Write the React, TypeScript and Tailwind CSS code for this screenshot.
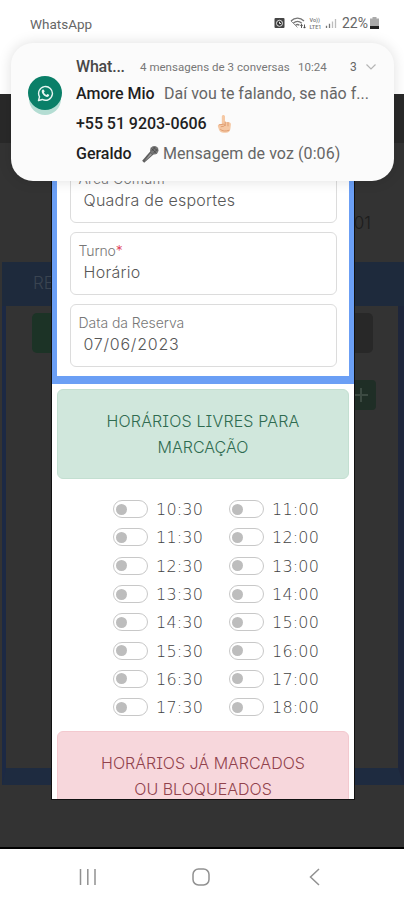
import React from "react";

const leftTimes = ["10:30", "11:30", "12:30", "13:30", "14:30", "15:30", "16:30", "17:30"];
const rightTimes = ["11:00", "12:00", "13:00", "14:00", "15:00", "16:00", "17:00", "18:00"];

function WhatsAppIcon() {
  return (
    <svg width="17" height="17" viewBox="0 0 18 18" fill="none">
      <path d="M1.6 16.4l1.1-3.9A7.3 7.3 0 1 1 5.6 15.3z" stroke="#e8f5f1" strokeWidth="1.5" strokeLinejoin="round" />
      <path d="M6.2 4.8l1.1.1.8 1.9-.8 1.1c.6 1.2 1.4 2 2.7 2.6l.9-1 2 .9c.1 1.500-1 2.300-2.200 2.300C8 12.400 5 9.400 5 6.700c0-.9.500-1.700 1.200-1.900z" fill="#e8f5f1" />
    </svg>
  );
}

function StatusIcons() {
  return (
    <svg width="64" height="16" viewBox="0 0 64 16" fill="none">
      <rect x="0.500" y="3" width="10" height="10" rx="1" fill="#454545" />
      <circle cx="5.500" cy="8.300" r="3" fill="#333" stroke="#e5e5e5" strokeWidth="1" />
      <path d="M5.500 6.800v1.700h1.600" stroke="#fff" strokeWidth="0.900" />
      <path d="M17 6c3.800-3.900 9.200-3.900 13 0M19.200 8.300c2.700-2.500 5.900-2.500 8.600 0M21.500 10.300c1.300-1.100 2.600-1.100 3.900 0" stroke="#777" strokeWidth="1.300" />
      <path d="M17 6l6.500 6.500" stroke="#888" strokeWidth="0.900" />
      <path d="M27.500 13V9.500m-1.200 1.200 1.200-1.300 1.200 1.300M30.500 9.500v3.600m-1.100-1.200 1.100 1.200 1.100-1.200" stroke="#444" strokeWidth="0.900" />
      <g fill="#777" fontFamily="Roboto, sans-serif" fontSize="5.500" fontWeight="500">
        <text x="35.500" y="7.200">Vo))</text>
        <text x="35.500" y="13.800">LTE1</text>
      </g>
      <path d="M52.500 13v-2.300M55.500 13V8.700" stroke="#777" strokeWidth="1.300" />
      <path d="M58.500 13V6.500M61.500 13V4" stroke="#bdbdbd" strokeWidth="1.300" />
    </svg>
  );
}

function Microphone() {
  return (
    <svg width="18" height="19" viewBox="0 0 18 19">
      <path d="M9.800 5.800l3.200 3.200L3.200 17.700l-2-2z" fill="#5d5d5d" />
      <path d="M9.500 8.200l1.500 1.500-7.800 6.700z" fill="#999" />
      <circle cx="13.300" cy="5.300" r="4.200" fill="#777" />
      <path d="M10.500 3.500l4.700 4.600M12.400 2l4 4M10.400 6.200l4-4.300M12.300 8.400l4.300-4.500" stroke="#444" strokeWidth="0.700" />
    </svg>
  );
}

function PointingHand() {
  return (
    <svg width="15" height="20" viewBox="0 0 15 20">
      <path d="M4.800 10V2.600C4.800.5 8 .5 8 2.600v5.200l3.900.4c1.500.2 2.100 1 2 2.300l-.5 4.300c-.3 2.800-1.900 4-4.500 4H6.400c-2 0-3.400-1-4.300-2.800L.9 12.600c-.4-1.300.5-2 1.600-2.100z" fill="#f5c8a4" />
      <path d="M2.200 10.800l4.300-.6c1.400 0 1.600 1.700.3 2l-2.700.5M8.200 8v3.600M11 8.400v3.500M3.500 15.500c1.700 1.800 5.300 2 8.500.8" fill="none" stroke="#dd986c" strokeWidth="0.900" strokeLinecap="round" />
    </svg>
  );
}

function Toggle() {
  return (
    <span className="flex h-[18px] w-[35px] shrink-0 items-center rounded-full border border-[#c8c8c8] bg-white pl-[2px]">
      <span className="h-[11px] w-[11px] rounded-full bg-[#bdbdbd]" />
    </span>
  );
}

function TimeColumn({ times }: { times: string[] }) {
  return (
    <div className="flex w-[116px] flex-col">
      {times.map((t) => (
        <div key={t} className="flex h-[28.3px] items-center gap-[8px]">
          <Toggle />
          <span className="pt-[2px] font-['DejaVu_Sans'] text-[16px] font-extralight leading-none tracking-[0.2px] text-[#424242]">{t}</span>
        </div>
      ))}
    </div>
  );
}

function Field({ label, value, required, tracking, labelTracking }: { label: string; value: string; required?: boolean; tracking: string; labelTracking: string }) {
  return (
    <div className="h-[63px] w-[267px] shrink-0 rounded-[6px] border border-[#dcdcdc] pl-[8px] pt-[9px] text-[#777]">
      <div className={"h-[18px] whitespace-nowrap text-[14px] font-light leading-[18px] " + labelTracking}>
        {label}
        {required && <span className="text-[#e0405a]">*</span>}
      </div>
      <div className={"ml-[5px] mt-[1px] whitespace-nowrap text-[16px] font-light leading-[22px] text-[#585858] " + tracking}>{value}</div>
    </div>
  );
}

function Backdrop() {
  return (
    <div className="flex h-[755px] flex-col overflow-hidden border-b-2 border-black bg-[#333]">
      <div className="h-[49px] shrink-0 bg-[#292929]" />
      <div className="flex h-[119px] shrink-0 items-end justify-end pb-[26px] pr-[33px] text-[17px] font-light text-[#1c1c1c]">01</div>
      <div className="ml-[2px] flex h-[523px] shrink-0 flex-col border-b-[17px] border-l-[4px] border-r-[6px] border-b-[#1e2b40] border-l-[#1c2944] border-r-[#1e263b]">
        <div className="-ml-[4px] -mr-[6px] flex h-[44px] shrink-0 items-center bg-[#1e2a3c] pl-[31px] text-[17px] font-light text-[#3a4451]">RE</div>
        <div className="mt-[7px] flex justify-between pl-[26px] pr-[25px]">
          <div className="h-[40px] w-[60px] rounded-[5px] bg-[#1c3326]" />
          <div className="h-[40px] w-[60px] rounded-[5px] bg-[#282828]" />
        </div>
        <div className="mr-[22px] mt-[27px] flex h-[30px] w-[30px] items-center justify-center self-end rounded-[4px] bg-[#1f2e26]">
          <svg width="14" height="14" viewBox="0 0 14 14" stroke="#3c4a42" strokeWidth="2"><path d="M7 0v14M0 7h14" /></svg>
        </div>
      </div>
    </div>
  );
}

function ReservationModal() {
  return (
    <div className="absolute left-[52px] top-[94px] flex h-[705px] w-[302px] flex-col overflow-hidden bg-white shadow-[0_0_0_1px_#111] [font-feature-settings:'cv08']">
      <div className="flex h-[290px] shrink-0 flex-col items-center gap-[9px] border-x-[5px] border-b-[8px] border-[#6b9ff5] pt-[66px]">
        <Field label="Área Comum" value="Quadra de esportes" tracking="tracking-[0.25px]" labelTracking="tracking-[0.1px]" />
        <Field label="Turno" value="Horário" required tracking="tracking-[0.3px]" labelTracking="tracking-[-0.1px]" />
        <Field label="Data da Reserva" value="07/06/2023" tracking="tracking-[0.75px]" labelTracking="tracking-[-0.05px]" />
      </div>
      <div className="mx-[5px] mt-[5px] flex h-[90px] shrink-0 flex-col items-center rounded-[6px] border border-[#c3dfd1] bg-[#d0e7dc] pt-[18px] text-[16px] font-light leading-[26px] text-[#2f6b50]">
        <span className="whitespace-nowrap tracking-[0.15px]">HORÁRIOS LIVRES PARA</span>
        <span>MARCAÇÃO</span>
      </div>
      <div className="mt-[16px] flex h-[227px] shrink-0 pl-[61px]">
        <TimeColumn times={leftTimes} />
        <TimeColumn times={rightTimes} />
      </div>
      <div className="mx-[5px] mt-[9px] flex h-[90px] shrink-0 flex-col items-center rounded-[6px] border border-[#f3c9cf] bg-[#f7d7dc] pt-[18px] text-[16px] font-light leading-[26px] text-[#91424c]">
        <span className="whitespace-nowrap">HORÁRIOS JÁ MARCADOS</span>
        <span className="whitespace-nowrap">OU BLOQUEADOS</span>
      </div>
    </div>
  );
}

function Notification() {
  return (
    <div className="absolute left-[11px] top-[43px] flex h-[138px] w-[383px] rounded-[22px] bg-[#fbfbfb] font-['Roboto'] shadow-[0_0_14px_rgba(0,0,0,0.13)]">
      <div className="ml-[17px] mt-[33px] flex h-[34px] w-[34px] items-center justify-center rounded-full bg-[#0a7f68] shadow-[0_6px_0_-1px_#b4ddd3]">
        <WhatsAppIcon />
      </div>
      <div className="ml-[14px] flex flex-1 flex-col whitespace-nowrap text-[16px] text-[#1f1f1f]">
        <div className="mt-[11px] flex h-[26px] items-center">
          <span className="w-[64px] text-[16px] font-medium tracking-[-0.2px] text-[#484848]">What...</span>
          <span className="w-[158px] pt-[2px] text-[11.500px] tracking-[0.03px] text-[#777]">4 mensagens de 3 conversas</span>
          <span className="w-[52px] pt-[2px] text-[11.500px] text-[#777]">10:24</span>
          <span className="w-[16px] text-[12px] text-[#666]">3</span>
          <svg width="10" height="6" viewBox="0 0 10 6" fill="none" stroke="#b5b5b5" strokeWidth="1.200"><path d="M.5.5 5 5 9.500.5" /></svg>
        </div>
        <div className="flex h-[28px] items-center">
          <span className="w-[88px] font-medium">Amore Mio</span>
          <span className="text-[#666]">Daí vou te falando, se não f...</span>
        </div>
        <div className="flex h-[31px] items-center">
          <span className="w-[141px] font-medium tracking-[-0.05px]">+55 51 9203-0606</span>
          <PointingHand />
        </div>
        <div className="flex h-[30px] items-center">
          <span className="w-[65px] font-medium">Geraldo</span>
          <Microphone />
          <span className="ml-[4px] tracking-[0.08px] text-[#666]">Mensagem de voz (0:06)</span>
        </div>
      </div>
    </div>
  );
}

export default function App() {
  return (
    <div className="relative flex h-[900px] w-[404px] flex-col overflow-hidden bg-white font-['Inter']">
      <div className="flex h-[94px] shrink-0 items-start justify-between pl-[30px] pr-[25px] pt-[14px] font-['Roboto'] text-[#666]">
        <span className="text-[13.500px] leading-[20px]">WhatsApp</span>
        <div className="flex items-center">
          <StatusIcons />
          <span className="ml-[4px] text-[14px] leading-[18px] text-[#666]">22%</span>
          <svg className="ml-[2px]" width="9" height="12" viewBox="0 0 9 12"><path d="M2.500 0h4v1.500H9V12H0V1.500h2.500z" fill="#aaa" /><path d="M0 9h9v3H0z" fill="#222" /></svg>
        </div>
      </div>
      <Backdrop />
      <div className="flex h-[51px] shrink-0 items-center bg-white pl-[79px] pt-[4px]">
        <svg width="18" height="16" viewBox="0 0 18 16" stroke="#919191" strokeWidth="1.500"><path d="M1.500 0v16M8.800 0v16M16 0v16" /></svg>
        <svg className="ml-[95px]" width="18" height="18" viewBox="0 0 18 18" fill="none" stroke="#919191" strokeWidth="1.500"><rect x="1" y="1" width="16" height="16" rx="5.500" /></svg>
        <svg className="ml-[99px]" width="11" height="18" viewBox="0 0 11 18" fill="none" stroke="#919191" strokeWidth="1.500"><path d="M10 1 1.500 9 10 17" /></svg>
      </div>
      <ReservationModal />
      <Notification />
    </div>
  );
}
